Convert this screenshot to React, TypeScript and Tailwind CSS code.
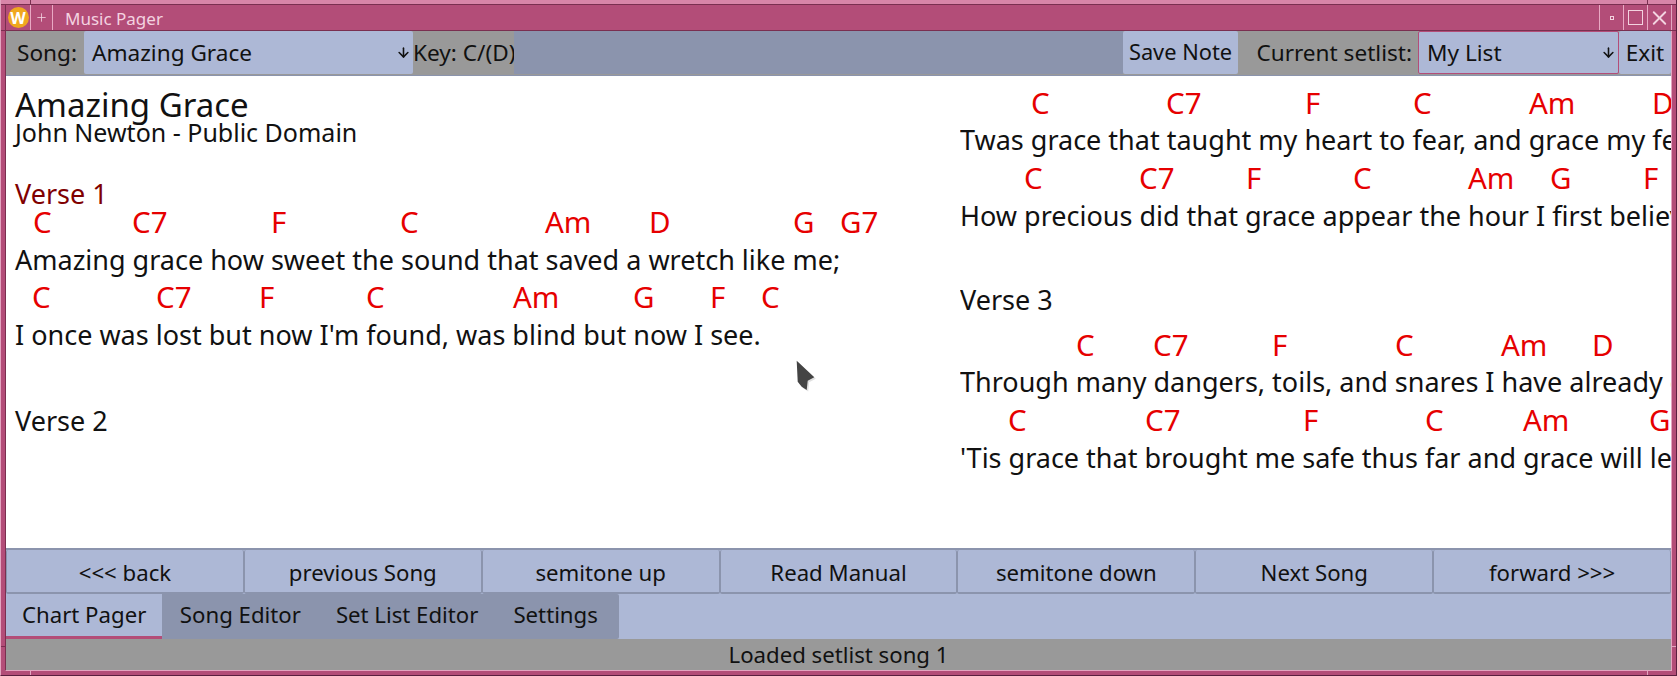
import React from 'react';
import { ArrowDown, Plus, X } from 'lucide-react';

type Chord = [string, number];

// chord x positions come from the chart, each span runs up to the next chord
const ChordLine = ({ chords }: { chords: Chord[] }) => (
  <div className="flex h-[37.6px] items-center whitespace-pre text-[29.5px] text-[#e60000]" style={{ paddingLeft: chords[0][1] }}>
    {chords.map(([name, x], i) => (
      <span key={i} className="shrink-0" style={{ width: (chords[i + 1]?.[1] ?? x + 60) - x }}>
        {name}
      </span>
    ))}
  </div>
);

const Lyric = ({ children }: { children: React.ReactNode }) => (
  <div className="flex h-[37.6px] items-center whitespace-pre">{children}</div>
);

const NavButton = ({ children }: { children: React.ReactNode }) => (
  <button className="h-[44px] flex-1 rounded-[2px] border-x border-b-2 border-[#8b94ad] bg-[#adb8d6] pt-[3px] text-[22.2px] text-[#111]">{children}</button>
);

const Tab = ({ children, active }: { children: React.ReactNode; active?: boolean }) =>
  active ? (
    <div className="flex items-center whitespace-nowrap border-b-[3px] border-[#b34d78] bg-[#adb8d6] px-[16px]">{children}</div>
  ) : (
    <div className="flex items-center whitespace-nowrap bg-[#8b94ad] px-[17.5px] pb-[4px] last:rounded-r-[2px] last:pr-[21px]">{children}</div>
  );

export default function App() {
  return (
    <div className="relative h-[676px] w-[1677px] overflow-hidden border-x border-b border-b-[#5a1f3f] border-l-[#e3a5c0] border-r-[#5a1f3f] bg-[#b34d78] px-[4px] pb-[4px] font-['Noto_Sans',sans-serif] text-[#111]">
      <div className="-mx-[5px] h-[5px] border-b border-[#7a2f50] bg-[#d885a8]" />
      <div className="flex h-[666px] flex-col border-x border-b border-b-[#e3a5c0] border-l-[#7a2f50] border-r-[#e3a5c0] bg-[#adb8d6]">
        <div className="flex h-[26px] shrink-0 items-stretch border-b border-[#7a2f50] bg-[#b34d78] text-[#f3d3e0]">
          <div className="flex w-[24px] items-center justify-center">
            <div className="flex h-[21px] w-[21px] items-center justify-center rounded-full bg-[#f0a81e] text-[16px] font-bold text-white">W</div>
          </div>
          <div className="flex w-[23px] items-center justify-center border-x border-[#e9a9c4]">
            <Plus size={13} strokeWidth={1.5} />
          </div>
          <span className="ml-[12px] flex items-center pt-[3px] text-[17px]">Music Pager</span>
          <div className="flex-1" />
          <div className="flex w-[24px] items-center justify-center border-l border-[#e9a9c4]">
            <div className="h-[4px] w-[4px] border border-[#f3d3e0]" />
          </div>
          <div className="flex w-[24px] items-center justify-center border-l border-[#e9a9c4]">
            <div className="h-[15px] w-[15px] border border-[#f3d3e0]" />
          </div>
          <div className="flex w-[24px] items-center justify-center border-l border-[#e9a9c4]">
            <X size={24} strokeWidth={2} />
          </div>
        </div>

        <div className="flex h-[45px] shrink-0 items-stretch border-b border-[#8b94ad] bg-[#999] pb-[1px] text-[22.6px]">
          <div className="flex w-[78px] items-center justify-center pl-[4px]">Song:</div>
          <div className="flex w-[329px] items-center justify-between rounded-[2px] bg-[#adb8d6] pl-[8px] pr-[2px]">
            <span>Amazing Grace</span>
            <ArrowDown size={15} strokeWidth={2.5} />
          </div>
          <div className="flex w-[101px] items-center whitespace-pre">Key: C/(D)</div>
          <div className="flex-1 bg-[#8b94ad]" />
          <div className="flex w-[115px] items-center justify-center rounded-[2px] bg-[#adb8d6] text-[21.8px]">Save Note</div>
          <div className="flex w-[180px] items-center justify-end pr-[6px]">Current setlist:</div>
          <div className="flex w-[201px] items-center justify-between rounded-[2px] border border-[#b34d78] bg-[#adb8d6] pl-[8px] pr-[2px]">
            <span>My List</span>
            <ArrowDown size={15} strokeWidth={2.5} />
          </div>
          <div className="flex w-[52px] items-center justify-center rounded-[2px] bg-[#adb8d6]">Exit</div>
        </div>

        <div className="flex min-h-0 flex-1 overflow-hidden bg-white text-[27px] leading-none">
          <div className="w-[954px] shrink-0 pl-[9px] pt-[10px]">
            <div className="h-[33px] text-[33px] leading-[37px]">Amazing Grace</div>
            <div className="h-[26px] text-[25px] leading-[26px]">John Newton - Public Domain</div>
            <div className="h-[36px]" />
            <div className="h-[22px] leading-[26px] text-[#800000]">Verse 1</div>
            <ChordLine chords={[['C', 18], ['C7', 117], ['F', 256], ['C', 385], ['Am', 530], ['D', 634], ['G', 778], ['G7', 825]]} />
            <Lyric>Amazing grace how sweet the sound that saved a wretch like me;</Lyric>
            <ChordLine chords={[['C', 17], ['C7', 141], ['F', 244], ['C', 351], ['Am', 498], ['G', 618], ['F', 695], ['C', 746]]} />
            <Lyric>I once was lost but now I'm found, was blind but now I see.</Lyric>
            <div className="h-[48px]" />
            <Lyric>Verse 2</Lyric>
          </div>
          <div className="min-w-0 flex-1 overflow-hidden pt-[7.5px]">
            <ChordLine chords={[['C', 71], ['C7', 206], ['F', 345], ['C', 453], ['Am', 569], ['D', 692]]} />
            <Lyric>Twas grace that taught my heart to fear, and grace my fears relieved;</Lyric>
            <ChordLine chords={[['C', 64], ['C7', 179], ['F', 286], ['C', 393], ['Am', 508], ['G', 590], ['F', 683]]} />
            <Lyric>How precious did that grace appear the hour I first believed.</Lyric>
            <div className="h-[47px]" />
            <Lyric>Verse 3</Lyric>
            <div className="h-[7px]" />
            <ChordLine chords={[['C', 116], ['C7', 193], ['F', 312], ['C', 435], ['Am', 541], ['D', 632]]} />
            <Lyric>Through many dangers, toils, and snares I have already come;</Lyric>
            <ChordLine chords={[['C', 48], ['C7', 185], ['F', 343], ['C', 465], ['Am', 563], ['G', 689]]} />
            <Lyric>'Tis grace that brought me safe thus far and grace will lead me home.</Lyric>
          </div>
        </div>

        <div className="flex h-[46px] shrink-0 items-stretch border-t-2 border-[#8b94ad] bg-[#adb8d6]">
          <NavButton>&lt;&lt;&lt; back</NavButton>
          <NavButton>previous Song</NavButton>
          <NavButton>semitone up</NavButton>
          <NavButton>Read Manual</NavButton>
          <NavButton>semitone down</NavButton>
          <NavButton>Next Song</NavButton>
          <NavButton>forward &gt;&gt;&gt;</NavButton>
        </div>

        <div className="flex h-[45px] shrink-0 items-stretch bg-[#adb8d6] text-[22.2px]">
          <Tab active>Chart Pager</Tab>
          <Tab>Song Editor</Tab>
          <Tab>Set List Editor</Tab>
          <Tab>Settings</Tab>
        </div>

        <div className="flex h-[31px] shrink-0 items-center justify-center bg-[#999] text-[22.2px]">Loaded setlist song 1</div>
      </div>

      {/* window frame grip ticks */}
      <div className="absolute left-[29px] top-0 h-[5px] w-px bg-[#7a2f50]" />
      <div className="absolute left-[1646px] top-0 h-[5px] w-px bg-[#7a2f50]" />
      <div className="absolute left-0 top-[30px] h-px w-[5px] bg-[#7a2f50]" />
      <div className="absolute right-0 top-[30px] h-px w-[5px] bg-[#7a2f50]" />
      <div className="absolute bottom-0 left-[29px] h-[5px] w-px bg-[#e3a5c0]" />
      <div className="absolute bottom-0 left-[1646px] h-[5px] w-px bg-[#e3a5c0]" />
      <div className="absolute left-0 top-[646px] h-px w-[5px] bg-[#7a2f50]" />
      <div className="absolute right-0 top-[646px] h-px w-[5px] bg-[#e3a5c0]" />

      <svg className="absolute left-[789px] top-[358px]" width="32" height="36" viewBox="0 0 32 36">
        <path d="M6.7 2.7 L24.3 19.3 L17.7 22.7 L16.7 32 L11.7 28.7 L7.7 23.7 Z" fill="#000" opacity="0.12" transform="translate(1.5 1.5)" />
        <path d="M6.7 2.7 L24.3 19.3 L17.7 22.7 L16.7 32 L11.7 28.7 L7.7 23.7 Z" fill="#444" />
      </svg>
    </div>
  );
}
